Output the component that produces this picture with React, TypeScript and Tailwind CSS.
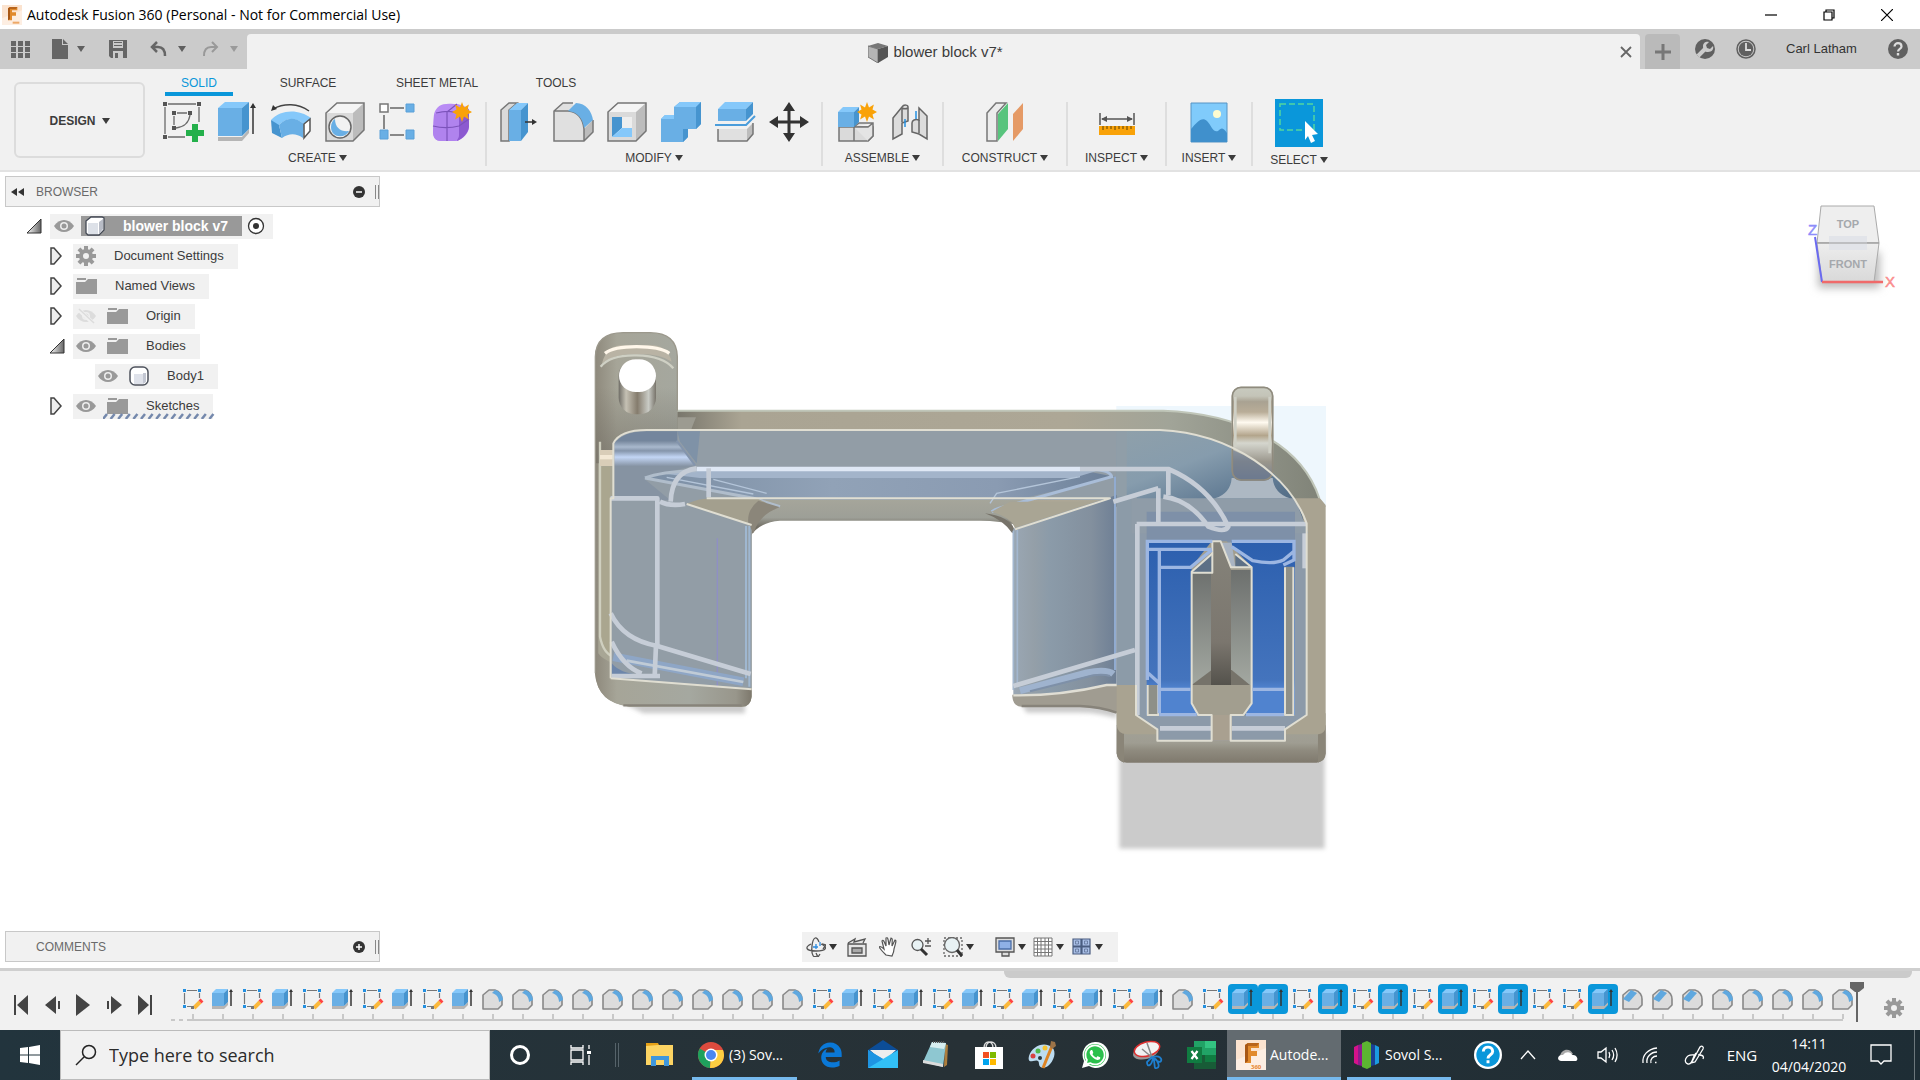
import type { ReactNode } from "react";
import { FaEdgeLegacy, FaWhatsapp } from "react-icons/fa";
import clsx from "clsx";

const UI_FONT = "font-['Liberation_Sans',Arial,sans-serif]";
const WIN_FONT = "font-['Open_Sans','Noto_Sans',sans-serif]";

/* ---------- small shared pieces ---------- */

function Caret({ className }: { className?: string }) {
  return (
    <svg viewBox="0 0 8 6" className={clsx("w-2 h-1.5 shrink-0", className)} fill="currentColor">
      <path d="M0 0h8L4 6z" />
    </svg>
  );
}

function Star({ x, y }: { x: number; y: number }) {
  return (
    <path
      transform={`translate(${x} ${y})`}
      fill="#f9a208"
      d="M0-10l2 5.600 4.900-3.200-1.400 5L10 0 5.500 2.600l1.400 5L2 4.400 0 10l-2-5.600-4.900 3.200 1.400-5L-10 0l4.500-2.600-1.400-5L-2-4.400z"
    />
  );
}

function Icon40({ children }: { children: ReactNode }) {
  return <svg viewBox="0 0 40 40" className="w-10 h-10 overflow-visible" fill="none">{children}</svg>;
}

/* ---------- ribbon icons ---------- */

const SketchIcon = (
  <Icon40>
    <path d="M5 2h28M2 5v27M36 5v15M5 35h17" stroke="#6b6b6b" strokeWidth="1.300" />
    <path d="M14 11h10M11 14v9M27 13c-1 7-6 12-14 13" stroke="#6b6b6b" strokeWidth="1.300" />
    <path d="M0 0h4v4H0zM34 0h4v4h-4zM0 33h4v4H0zM9 9h4v4H9zM25 9h4v4h-4zM9 24h4v4H9z" fill="#555" />
    <path d="M29 22h6v6h6v6h-6v6h-6v-6h-6v-6h6z" fill="#24b04b" />
  </Icon40>
);

const ExtrudeIcon = (
  <Icon40>
    <path d="M1 35h24l7-8v4l-7 8H1z" fill="#b5b5b5" />
    <path d="M1 6h24v28H1z" fill="#69afe5" />
    <path d="M1 6l7-6h24l-7 6z" fill="#85c8fa" />
    <path d="M25 6l7-6v27l-7 7z" fill="#4694cf" />
    <path d="M36 32V4" stroke="#333" strokeWidth="1.500" />
    <path d="M33 6l3-5 3 5z" fill="#333" />
  </Icon40>
);

const RevolveIcon = (
  <Icon40>
    <path d="M2 7C13 1 27 1 38 9" stroke="#444" strokeWidth="1.500" />
    <path d="M0 9l2-6 4 4z" fill="#333" />
    <path d="M0 18C10 7 28 7 40 16l-7 6C24 15 15 15 7 24z" fill="#85c8fa" />
    <path d="M0 18l8 5 3 13-10-5z" fill="#4694cf" />
    <path d="M8 23c8-8 16-8 25-1l-1 14c-7-5-14-5-21 0z" fill="#69afe5" />
    <path d="M33 22l6-5v12l-6 7z" fill="#fff" stroke="#555" strokeWidth="1.500" />
  </Icon40>
);

const HoleIcon = (
  <Icon40>
    <path d="M1 11L12 1h27L28 11z" fill="#f5f5f5" />
    <path d="M28 11L39 1v27L28 39z" fill="#bcbcbc" />
    <path d="M1 11h27v28H1z" fill="#dadada" />
    <path d="M1 11L12 1h27v27L28 39H1z" stroke="#757575" strokeWidth="1.500" />
    <circle cx="15" cy="25" r="11" fill="#f2f2f2" stroke="#666" strokeWidth="1.500" />
    <path d="M10 17c0 9 6 13 14 12-4 8-18 7-18-4 0-4 2-7 4-8z" fill="#69afe5" />
  </Icon40>
);

const PatternIcon = (
  <Icon40>
    <path d="M11 6h14M11 33h14M5 13v14" stroke="#666" strokeWidth="1.500" />
    <path d="M1 2h8v8H1z" fill="#fff" stroke="#777" strokeWidth="1.500" />
    <path d="M27 2h8v8h-8zM1 28h8v9H1zM27 28h8v9h-8z" fill="#69afe5" stroke="#5aa0d8" />
  </Icon40>
);

const FormIcon = (
  <Icon40>
    <path d="M1 12C4 3 9 1 21 2c12 0 15 5 15 13v10c0 6-6 12-12 14H8c-6 0-8-4-8-10z" fill="#b98cf5" />
    <path d="M26 12l10-5v18c-1 6-6 12-12 14 2-8 2-18 2-27z" fill="#8c5ad0" />
    <path d="M1 13c3-3 21-3 25 0v20c0 4-3 6-6 6H8c-5 0-8-3-8-9z" fill="#b083ee" />
    <path d="M0 24c8 2 18 2 26 0l10-7M14 10v29M14 10L24 2M3 11c8-2 18-2 24 1M26 12l9-6" stroke="#7c53bb" strokeWidth="1.200" />
    <Star x={29} y={10} />
  </Icon40>
);

const PressPullIcon = (
  <Icon40>
    <path d="M2 8l8-7h8l-8 7v31H2z" fill="#dadada" stroke="#777" strokeWidth="1.500" />
    <path d="M10 8h12v31H10z" fill="#69afe5" />
    <path d="M10 8l8-7h11l-7 7z" fill="#85c8fa" />
    <path d="M22 8l7-7v29l-7 9z" fill="#4694cf" />
    <path d="M26 20h8" stroke="#333" strokeWidth="1.500" />
    <path d="M33 17l5 3-5 3z" fill="#333" />
  </Icon40>
);

const FilletIcon = (
  <Icon40>
    <path d="M1 9l9-8h8l12 11 10 7v11L31 39H1z" fill="#e0e0e0" />
    <path d="M31 27l9-9v12l-9 9z" fill="#bcbcbc" />
    <path d="M20 1H10L1 9v30h30l9-9V18M31 39V27C30 17 25 10 15 9H1" stroke="#777" strokeWidth="1.500" />
    <path d="M15 9l8-8c10 0 16 9 17 17l-9 8C30 17 25 10 15 9z" fill="#69afe5" />
  </Icon40>
);

const ShellIcon = (
  <Icon40>
    <path d="M1 10l10-9h28L29 10z" fill="#f5f5f5" />
    <path d="M29 10l10-9v28L29 39z" fill="#bcbcbc" />
    <path d="M1 10h28v29H1z" fill="#dadada" />
    <path d="M1 10l10-9h28v28L29 39H1z" stroke="#757575" strokeWidth="1.500" />
    <path d="M5 15h20v20H5z" fill="#fff" />
    <path d="M5 15h10v11L5 35z" fill="#4694cf" />
    <path d="M15 15h10v11H15z" fill="#eee" />
    <path d="M15 26h10v9H5z" fill="#85c8fa" />
  </Icon40>
);

const CombineIcon = (
  <Icon40>
    <path d="M0 17l4-4h9V5l6-5h21v22l-5 5H27v8l-5 5H0z" fill="#69afe5" />
    <path d="M0 17l4-4h9v4zM13 5l6-5h21l-5 5z" fill="#85c8fa" />
    <path d="M35 5l5-5v22l-5 5zM27 27v8l-5 5V27z" fill="#4694cf" />
  </Icon40>
);

const SplitIcon = (
  <Icon40>
    <path d="M3 7h28v12H3z" fill="#69afe5" />
    <path d="M3 7l7-7h28l-7 7z" fill="#85c8fa" />
    <path d="M31 7l7-7v12l-7 7z" fill="#4694cf" />
    <path d="M0 23h31l9-9" stroke="#4b9ddb" strokeWidth="2" />
    <path d="M3 27h29v12H3z" fill="#e0e0e0" />
    <path d="M32 27l6-6v11l-6 7z" fill="#bcbcbc" />
    <path d="M3 27v12h29l6-7V21" stroke="#757575" strokeWidth="1.500" />
  </Icon40>
);

const MoveIcon = (
  <Icon40>
    <path d="M20 6v28M6 20h28" stroke="#333" strokeWidth="3" />
    <path d="M20 0l6 9H14zM20 40l6-9H14zM0 20l9-6v12zM40 20l-9-6v12z" fill="#333" />
  </Icon40>
);

const AssembleIcon = (
  <Icon40>
    <path d="M3 25h34v9l-5 5H3z" fill="#dadada" stroke="#757575" strokeWidth="1.500" />
    <path d="M18 25l5-4h14v13l-5 5M18 25v14M18 25h14l5-4" stroke="#757575" strokeWidth="1.500" fill="#e4e4e4" />
    <path d="M2 10h16v15H2z" fill="#69afe5" />
    <path d="M2 10l5-5h16l-5 5z" fill="#85c8fa" />
    <path d="M18 10l5-5v15l-5 5z" fill="#4694cf" />
    <Star x={31} y={10} />
  </Icon40>
);

const JointIcon = (
  <Icon40>
    <path d="M3 16L12 5c2-3 6-2 6 0v14l-6 2v11l-9 5z" fill="#dcdcdc" stroke="#666" strokeWidth="1.500" />
    <path d="M12 6v14M12 6c2 1 4 1 6 0" stroke="#666" strokeWidth="1.500" />
    <path d="M37 14L29 6v12c-4-1-7 0-7 3v9l7 2 8 5z" fill="#dcdcdc" stroke="#666" strokeWidth="1.500" />
    <path d="M29 18v13" stroke="#666" strokeWidth="1.500" />
    <path d="M15 17v8M26 9v8" stroke="#2490e0" strokeWidth="1.500" />
  </Icon40>
);

const ConstructIcon = (
  <Icon40>
    <path d="M2 11L11 1h10l-9 10v28H2z" fill="#ececec" stroke="#777" strokeWidth="1.500" />
    <path d="M13 12L23 1v26L13 39z" fill="#58c47d" />
    <path d="M28 12L38 1v26L28 39z" fill="#e59a66" />
  </Icon40>
);

const MeasureIcon = (
  <Icon40>
    <path d="M3 11v12M37 11v12M5 17h30" stroke="#555" strokeWidth="1.500" />
    <path d="M4 17l6-3v6zM36 17l-6-3v6z" fill="#555" />
    <path d="M2 24h36v9H2z" fill="#f9a208" />
    <path d="M6 24v4M10 24v3M14 24v3M18 24v4M22 24v3M26 24v3M30 24v4M34 24v3" stroke="#5c4000" />
  </Icon40>
);

const InsertIcon = (
  <Icon40>
    <path d="M2 1h36v39H2z" fill="#80cbfb" stroke="#5694c4" />
    <path d="M2 27c6-7 11-13 16-8 4 4 6 12 11 10 3-2 4-5 9 2v9H2z" fill="#4090cc" />
    <circle cx="28" cy="12" r="4" fill="#fdfcd0" />
  </Icon40>
);

const SelectIcon = (
  <svg viewBox="0 0 48 48" className="w-12 h-12" fill="none">
    <path d="M0 0h48v48H0z" fill="#0a97da" />
    <path d="M5 5h34v26H5z" stroke="#53d6a0" strokeWidth="1.500" strokeDasharray="6 3" />
    <path d="M30 22l13 13-6 1 3 6-4 2-3-7-3 4z" fill="#fff" />
  </svg>
);

/* ---------- browser tree icons ---------- */

function Eye({ off }: { off?: boolean }) {
  return (
    <svg viewBox="0 0 20 20" className="w-5 h-5" fill="none">
      <path d="M0 10c5-8 15-8 20 0-5 8-15 8-20 0z" fill={off ? "#dcdcdc" : "#999"} />
      <circle cx="10" cy="10" r="4" fill="#eee" />
      <circle cx="10" cy="10" r="2.500" fill={off ? "#dcdcdc" : "#999"} />
      {off && <path d="M2 3l16 15" stroke="#f1f1f1" strokeWidth="4" />}
      {off && <path d="M3 3l15 14" stroke="#dcdcdc" strokeWidth="1.500" />}
    </svg>
  );
}

function Folder() {
  return (
    <svg viewBox="0 0 21 20" className="w-[21px] h-5" fill="#999">
      <path d="M1 2h9v2H1zM0 6h9l3-3h9v15H0z" />
    </svg>
  );
}

function Gear({ className }: { className?: string }) {
  return (
    <svg viewBox="-10 -10 20 20" className={className} fill="none">
      <circle r="5" stroke="#999" strokeWidth="4" />
      {[0, 45, 90, 135].map((a) => (
        <path key={a} d="M0-10v4M0 6v4" stroke="#999" strokeWidth="4" transform={`rotate(${a})`} />
      ))}
    </svg>
  );
}

const CubeIcon = (
  <svg viewBox="0 0 20 20" className="w-5 h-5">
    <path d="M1 5l5-4h11l2 1v12l-5 5H3l-2-2z" fill="#fff" stroke="#444a55" strokeWidth="1.300" />
    <path d="M3 7h10v11H3z" fill="#dde1e8" />
    <path d="M14 6l4-3v10l-4 5z" fill="#b8bcc6" />
  </svg>
);

const BodyIcon = (
  <svg viewBox="0 0 20 20" className="w-5 h-5">
    <rect x="1" y="1" width="18" height="18" rx="5" fill="#fff" stroke="#4d525c" strokeWidth="1.500" />
    <path d="M5 8h9v10H5z" fill="#dfe2ea" />
    <path d="M14 7h3v9l-3 2z" fill="#c3c7d2" />
  </svg>
);

type Node = {
  label: string;
  arrow: "open" | "closed" | "none";
  indent: string;
  eye?: "on" | "off";
  icon: ReactNode;
  hatched?: boolean;
};

const NODES: Node[] = [
  { label: "Document Settings", arrow: "closed", indent: "pl-[43px]", icon: <Gear className="w-5 h-5" /> },
  { label: "Named Views", arrow: "closed", indent: "pl-[43px]", icon: <Folder /> },
  { label: "Origin", arrow: "closed", indent: "pl-[43px]", eye: "off", icon: <Folder /> },
  { label: "Bodies", arrow: "open", indent: "pl-[43px]", eye: "on", icon: <Folder /> },
  { label: "Body1", arrow: "none", indent: "pl-[65px]", eye: "on", icon: BodyIcon },
  { label: "Sketches", arrow: "closed", indent: "pl-[43px]", eye: "on", icon: <Folder />, hatched: true },
];

function TreeArrow({ kind }: { kind: Node["arrow"] }) {
  return (
    <button aria-label="Toggle" className="w-[30px] pl-1.5 shrink-0">
      {kind === "open" && (
        <svg viewBox="0 0 16 16" className="w-4 h-4">
          <defs>
            <linearGradient id="tri" x1="0" x2="1">
              <stop offset="0.2" stopColor="#ddd" />
              <stop offset="1" stopColor="#666" />
            </linearGradient>
          </defs>
          <path d="M15 1v14H1z" fill="url(#tri)" stroke="#333" />
        </svg>
      )}
      {kind === "closed" && (
        <svg viewBox="0 0 14 18" className="w-3.5 h-[18px]" fill="#eee" stroke="#444" strokeWidth="1.500">
          <path d="M2 1h3l7 8-7 8H2z" />
        </svg>
      )}
    </button>
  );
}

function PanelHeader({ label, children, open }: { label: string; children?: ReactNode; open: boolean }) {
  return (
    <div className="w-[375px] h-[31px] flex items-center bg-[#f1f1f1] border border-[#c8c8c8] text-xs text-[#6a6a6a] pl-[5px]">
      <span className="w-[25px]">{children}</span>
      <span>{label}</span>
      <button aria-label={open ? "Collapse" : "Expand"} className="ml-auto mr-2.5">
        <svg viewBox="0 0 12 12" className="w-3 h-3">
          <circle cx="6" cy="6" r="6" fill="#333" />
          <path d={open ? "M3 6h6" : "M3 6h6M6 3v6"} stroke="#fff" strokeWidth="1.500" />
        </svg>
      </button>
      <span className="w-1 h-3.5 border-x border-[#888]" />
    </div>
  );
}

function Browser() {
  return (
    <section className="w-[375px] text-[13px] text-[#3c3c3c]">
      <PanelHeader label="BROWSER" open>
        <svg viewBox="0 0 13 8" className="w-[13px] h-2" fill="#333">
          <path d="M6 0v8L0 4zM13 0v8L7 4z" />
        </svg>
      </PanelHeader>
      <div className="flex items-center h-[30px] pl-[15px] mt-1">
        <TreeArrow kind="open" />
        <div className="flex items-center h-[25px] bg-[#f1f1f1] pl-1 pr-2 gap-[7px]">
          <Eye />
          <span className="flex items-center gap-[18px] h-5 bg-[#999] text-white font-bold text-sm pl-1 pr-3.5">
            {CubeIcon}
            blower block v7
          </span>
          <svg viewBox="0 0 18 18" className="w-[18px] h-[18px] -ml-0.5">
            <circle cx="9" cy="9" r="7.500" fill="#fff" stroke="#333" strokeWidth="1.300" />
            <circle cx="9" cy="9" r="3" fill="#333" />
          </svg>
        </div>
      </div>
      {NODES.map((n) => (
        <div key={n.label} className={clsx("flex items-center h-[30px] -ml-[5px]", n.indent)}>
          <TreeArrow kind={n.arrow} />
          <div className="relative flex items-center h-[25px] bg-[#f1f1f1] pl-[3px] pr-3.5">
            {n.eye && <span className="mr-[11px]"><Eye off={n.eye === "off"} /></span>}
            <span className="mr-[18px]">{n.icon}</span>
            {n.label}
            {n.hatched && (
              <svg className="absolute left-[30px] bottom-0 h-1.5 w-[112px]">
                {Array.from({ length: 15 }, (_, i) => (
                  <path key={i} d={`M${i * 7.6} 6l4-5`} stroke="#7488ac" strokeWidth="2.500" />
                ))}
              </svg>
            )}
          </div>
        </div>
      ))}
    </section>
  );
}

/* ---------- top bars ---------- */

function FusionLogo({ className, tag }: { className?: string; tag?: boolean }) {
  return (
    <svg viewBox="0 0 30 30" className={className}>
      <path d="M0 0h30v30H0z" fill="#fbe3cf" />
      <path d="M0 20L30 8v22H0z" fill="#fdeee2" />
      <path d="M9 5l3-2h11v5h-8v3h6v5h-6v7H9z" fill="#e18a2c" />
      <path d="M9 5l3-2v18l-3 2z" fill="#a85714" />
      <path d="M12 3h11l-2 3h-9z" fill="#b8651c" />
      {tag ? (
        <text x="15" y="29" fontSize="6" fontWeight="bold" fill="#e8872f">360</text>
      ) : (
        <path d="M16 25h10v3H16z" fill="#eda867" />
      )}
    </svg>
  );
}

function TitleBar() {
  return (
    <header className={clsx("h-[29px] flex items-center bg-white pl-0.5 pr-1", WIN_FONT)}>
      <FusionLogo className="w-5 h-5" />
      <h1 className="ml-[5px] text-sm text-black">Autodesk Fusion 360 (Personal - Not for Commercial Use)</h1>
      <div className="ml-auto flex">
        {[
          ["Minimize", "M0 6h12"],
          ["Restore", "M1 3h8v8H1zM3 3V1h8v8H9"],
          ["Close", "M0 0l12 12M12 0L0 12"],
        ].map(([name, d]) => (
          <button key={name} aria-label={name} className="w-[58px] h-7 flex items-center justify-center">
            <svg viewBox="0 0 12 12" className="w-3 h-3" fill="none" stroke="#000" strokeWidth="1.200">
              <path d={d} />
            </svg>
          </button>
        ))}
      </div>
    </header>
  );
}

function TabStrip() {
  return (
    <div className="h-10 flex bg-[#cbcbcb] text-[#5f5f5f]">
      <div className="w-[247px] flex items-center pl-[11px] shrink-0">
        <button aria-label="Data panel" className="w-5">
          <svg viewBox="0 0 19 19" className="w-[19px] h-[19px]" fill="#666">
            <path d="M0 1h5v5H0zM7 1h5v5H7zM14 1h5v5h-5zM0 7h5v5H0zM7 7h5v5H7zM14 7h5v5h-5zM0 13h5v5H0zM7 13h5v5H7zM14 13h5v5h-5z" />
          </svg>
        </button>
        <button aria-label="File" className="ml-5 flex items-center gap-2">
          <svg viewBox="0 0 18 20" className="w-[18px] h-5" fill="#666">
            <path d="M1 0h10v6h6v14H1zM12 0l5 5h-5z" />
          </svg>
          <Caret />
        </button>
        <button aria-label="Save" className="ml-6">
          <svg viewBox="0 0 18 18" className="w-[18px] h-[18px]">
            <path d="M0 0h18v18H2l-2-2z" fill="#666" />
            <path d="M4 1h10v7H4zM4 11h10v7H4z" fill="#cbcbcb" />
            <path d="M5 2h8v1H5zM5 5h8v1H5zM6 13h3v5H6z" fill="#666" />
          </svg>
        </button>
        <button aria-label="Undo" className="ml-[23px] flex items-center gap-[11px]">
          <svg viewBox="0 0 17 16" className="w-[17px] h-4" fill="none" stroke="#666" strokeWidth="2.500">
            <path d="M7 1L2 6l5 5M2 6h6c5 0 7 4 7 9" />
          </svg>
          <Caret />
        </button>
        <button aria-label="Redo" className="ml-4 flex items-center gap-[11px] text-[#9a9a9a]">
          <svg viewBox="0 0 17 16" className="w-[17px] h-4" fill="none" stroke="#999" strokeWidth="2">
            <path d="M10 1l5 5-5 5M15 6H9c-5 0-7 4-7 9" />
          </svg>
          <Caret />
        </button>
      </div>
      <div className="flex-1 mt-[5px] rounded-t bg-[#f1f1f1] flex items-center text-[#3c3c3c]">
        <span className="w-3" />
        <span className="flex-1 flex items-center justify-center gap-[5px] pt-0.5 text-[15px]">
          <svg viewBox="0 0 20 20" className="w-5 h-5">
            <path d="M0 3l10-3 10 3-10 3z" fill="#777" />
            <path d="M0 3l10 3v14L0 14z" fill="#b5b5b5" stroke="#777" />
            <path d="M20 3L10 6v14l10-6z" fill="#555" />
          </svg>
          blower block v7*
        </span>
        <button aria-label="Close tab" className="w-7 flex justify-center">
          <svg viewBox="0 0 12 12" className="w-3 h-3" stroke="#666" strokeWidth="1.800">
            <path d="M1 1l10 10M11 1L1 11" />
          </svg>
        </button>
      </div>
      <div className="w-[280px] shrink-0 flex items-center text-[13px] text-[#333]">
        <button aria-label="New tab" className="w-[35px] h-[35px] mt-[5px] ml-[5px] rounded-t bg-[#bababa] flex items-center justify-center">
          <svg viewBox="0 0 16 16" className="w-4 h-4" stroke="#777" strokeWidth="3">
            <path d="M8 0v16M0 8h16" />
          </svg>
        </button>
        <button aria-label="Extensions" className="ml-[15px]">
          <svg viewBox="0 0 20 20" className="w-5 h-5">
            <circle cx="10" cy="10" r="10" fill="#606060" />
            <path d="M3 17l7-7" stroke="#cbcbcb" strokeWidth="4" />
            <path d="M8 7c0-4 4-5 6-4l-3 3 1 3 3 1 3-3c1 3-1 6-5 6-3 0-5-2-5-6z" fill="#cbcbcb" />
          </svg>
        </button>
        <button aria-label="Job status" className="ml-[21px]">
          <svg viewBox="0 0 20 20" className="w-5 h-5" fill="none">
            <circle cx="10" cy="10" r="9" stroke="#606060" strokeWidth="1.500" />
            <circle cx="10" cy="10" r="7.300" fill="#606060" />
            <path d="M10 4v7h5" stroke="#ddd" strokeWidth="1.800" />
          </svg>
        </button>
        <button className="ml-[30px]">Carl Latham</button>
        <button aria-label="Help" className="ml-auto mr-3">
          <svg viewBox="0 0 20 20" className="w-5 h-5" fill="none">
            <circle cx="10" cy="10" r="10" fill="#606060" />
            <path d="M6.500 7.500c0-4.500 7-4.500 7 0 0 2.500-3.500 2.300-3.500 5" stroke="#ddd" strokeWidth="2.200" />
            <path d="M8.800 14h2.400v2.500H8.800z" fill="#ddd" />
          </svg>
        </button>
      </div>
    </div>
  );
}

const TABS = [
  { label: "SOLID", width: "w-[68px]" },
  { label: "SURFACE", width: "w-[150px]" },
  { label: "SHEET METAL", width: "w-[108px]" },
  { label: "TOOLS", width: "w-[130px]" },
];

const GROUPS = [
  { label: "CREATE", width: "w-[332px] pr-[5px]", icons: [SketchIcon, ExtrudeIcon, RevolveIcon, HoleIcon, PatternIcon, FormIcon] },
  { label: "MODIFY", width: "w-[336px]", icons: [PressPullIcon, FilletIcon, ShellIcon, CombineIcon, SplitIcon, MoveIcon] },
  { label: "ASSEMBLE", width: "w-[121px]", icons: [AssembleIcon, JointIcon] },
  { label: "CONSTRUCT", width: "w-[124px]", icons: [ConstructIcon] },
  { label: "INSPECT", width: "w-[99px]", icons: [MeasureIcon] },
  { label: "INSERT", width: "w-[86px]", icons: [InsertIcon] },
  { label: "SELECT", width: "w-[94px]", icons: [SelectIcon] },
];

function Ribbon() {
  return (
    <div className="h-[103px] flex bg-[#f1f1f1] border-b-2 border-[#e2e2e2] text-xs text-[#3c3c3c]">
      <button className="w-[131px] h-[76px] mt-[13px] ml-3.5 shrink-0 border-2 border-[#dcdcdc] rounded-md flex items-center justify-center gap-1.5 pt-0.5 font-bold">
        DESIGN
        <Caret />
      </button>
      <div className="ml-2.5">
        <div role="tablist" className="flex h-[27px] pl-2.5">
          {TABS.map((t, i) => (
            <button
              key={t.label}
              role="tab"
              className={clsx("pt-1 border-b-4", t.width, i === 0 ? "text-[#0a97da] border-[#0a97da]" : "border-transparent")}
            >
              {t.label}
            </button>
          ))}
        </div>
        <div className="flex mt-1.5">
          {GROUPS.map((g) => (
            <div key={g.label} className={clsx("h-16 flex flex-col items-center border-r-2 border-[#dedede] last:border-transparent", g.width)}>
              <div className="h-[42px] flex items-center">
                {g.icons.map((icon, i) => (
                  <button key={i} aria-label={`${g.label} ${i + 1}`} className="w-[54px] flex justify-center">
                    {icon}
                  </button>
                ))}
              </div>
              <button className="mt-2 flex items-center gap-[3px] leading-4">
                {g.label}
                <Caret />
              </button>
            </div>
          ))}
        </div>
      </div>
    </div>
  );
}

/* ---------- 3D model ---------- */

// The part is drawn on a grid three times finer than the canvas.
function Model() {
  return (
    <svg viewBox="0 0 1920 796" className="absolute inset-0 w-full h-full" fill="none">
      <defs>
        <linearGradient id="bar" x1="0" y1="0" x2="0" y2="1">
          <stop offset="0" stopColor="#a6a69b" />
          <stop offset="0.5" stopColor="#9d9f97" />
          <stop offset="0.75" stopColor="#716d63" />
          <stop offset="1" stopColor="#8d897d" />
        </linearGradient>
        <linearGradient id="rim" x1="0" y1="0" x2="1" y2="0">
          <stop offset="0" stopColor="#78766c" />
          <stop offset="0.1" stopColor="#aaa493" />
          <stop offset="0.6" stopColor="#ada796" />
          <stop offset="0.76" stopColor="#a1a498" />
          <stop offset="1" stopColor="#7f8277" />
        </linearGradient>
        <linearGradient id="ear" x1="0" y1="0" x2="1" y2="0">
          <stop offset="0" stopColor="#8e897c" />
          <stop offset="0.14" stopColor="#a6a598" />
          <stop offset="0.6" stopColor="#a5a8a0" />
          <stop offset="0.9" stopColor="#98968b" />
          <stop offset="1" stopColor="#7d786c" />
        </linearGradient>
        <linearGradient id="shade" x1="0" y1="0" x2="0" y2="1">
          <stop offset="0" stopColor="#6b675e" stopOpacity="0" />
          <stop offset="1" stopColor="#6b675e" stopOpacity="0.55" />
        </linearGradient>
        <linearGradient id="hole" x1="0" y1="0" x2="1" y2="0">
          <stop offset="0" stopColor="#6f6d66" />
          <stop offset="0.2" stopColor="#c5c1b4" />
          <stop offset="0.5" stopColor="#857c6d" />
          <stop offset="0.8" stopColor="#c9cbc5" />
          <stop offset="1" stopColor="#77736a" />
        </linearGradient>
        <linearGradient id="leg" x1="0" y1="0" x2="1" y2="0">
          <stop offset="0" stopColor="#9aa7b4" />
          <stop offset="0.2" stopColor="#949fa8" />
          <stop offset="0.35" stopColor="#8b9ba9" />
          <stop offset="0.75" stopColor="#83909e" />
          <stop offset="1" stopColor="#6e7f95" />
        </linearGradient>
        <linearGradient id="roll" x1="0" y1="0" x2="0" y2="1">
          <stop offset="0" stopColor="#74859b" />
          <stop offset="0.25" stopColor="#a9b9cd" />
          <stop offset="0.4" stopColor="#8595ab" />
          <stop offset="0.65" stopColor="#c3d6f5" />
          <stop offset="1" stopColor="#8794a5" />
        </linearGradient>
        <linearGradient id="pocket" x1="0" y1="0" x2="1" y2="0">
          <stop offset="0" stopColor="#7b8ea4" />
          <stop offset="0.4" stopColor="#91a2b7" />
          <stop offset="0.75" stopColor="#8a9bb2" />
          <stop offset="1" stopColor="#6b7f98" />
        </linearGradient>
        <linearGradient id="arc" x1="0" y1="0" x2="0.8" y2="1">
          <stop offset="0" stopColor="#8fa0aa" />
          <stop offset="0.4" stopColor="#869cad" />
          <stop offset="0.75" stopColor="#5f7992" />
          <stop offset="1" stopColor="#4e6780" />
        </linearGradient>
        <linearGradient id="pin" x1="0" y1="0" x2="0" y2="1">
          <stop offset="0" stopColor="#c9cbc0" />
          <stop offset="0.1" stopColor="#c4c4b8" />
          <stop offset="0.16" stopColor="#a9a292" />
          <stop offset="0.27" stopColor="#b9ad98" />
          <stop offset="0.38" stopColor="#fffaf0" />
          <stop offset="0.52" stopColor="#b3a58c" />
          <stop offset="0.6" stopColor="#d5d6ce" />
          <stop offset="0.8" stopColor="#9a968c" />
          <stop offset="1" stopColor="#77808f" />
        </linearGradient>
        <linearGradient id="slot" x1="0" y1="0" x2="0" y2="1">
          <stop offset="0" stopColor="#6d706e" />
          <stop offset="1" stopColor="#a3a8a1" />
        </linearGradient>
        <linearGradient id="core" x1="0" y1="0" x2="0" y2="1">
          <stop offset="0" stopColor="#85837a" />
          <stop offset="0.7" stopColor="#7b766e" />
          <stop offset="1" stopColor="#54524c" />
        </linearGradient>
        <linearGradient id="blue" x1="0" y1="0" x2="0" y2="1">
          <stop offset="0" stopColor="#2c5fae" />
          <stop offset="0.8" stopColor="#4474bd" />
          <stop offset="0.85" stopColor="#5083cf" />
          <stop offset="1" stopColor="#5083cf" />
        </linearGradient>
        <linearGradient id="base" x1="0" y1="0" x2="0" y2="1">
          <stop offset="0" stopColor="#a5a69c" />
          <stop offset="0.6" stopColor="#9f9d92" />
          <stop offset="0.75" stopColor="#8f8b7f" />
          <stop offset="1" stopColor="#7f796d" />
        </linearGradient>
        <filter id="soft" x="-10%" y="-10%" width="120%" height="120%">
          <feGaussianBlur stdDeviation="7" />
        </filter>
      </defs>

      <g transform="translate(580 148) scale(0.33333)">
        {/* cast shadows */}
        <g fill="#cbcbcb" filter="url(#soft)">
          <rect x="1618" y="1240" width="616" height="346" />
          <path d="M110 1140H495V1180H190zM1310 1130H1610V1195Q1560 1178 1500 1178H1340z" />
        </g>
        <path d="M1609 258H2238V560H1609z" fill="#eef7fd" />

        {/* bar and right arc */}
        <path d="M290 272H1750C1960 280 2160 360 2218 535L2237 560H290z" fill="url(#rim)" />
        <path d="M290 272H1750C1960 280 2160 360 2218 535" stroke="#c0c6b9" strokeWidth="6" />
        <path d="M293 292H348L335 325V340H293z" fill="#9c9b91" />
        <path d="M500 535H1330V620Q1270 602 1200 602H600Q540 605 510 650z" fill="url(#bar)" />

        {/* left leg */}
        <path d="M45 110Q48 38 130 38H210Q290 38 292 110V540H520L515 640V1130Q512 1160 485 1160H150Q52 1150 45 1060z" fill="#a8a695" />
        <path d="M45 110Q48 38 130 38H210Q290 38 292 110V430H55V1000Q90 1060 515 1105V1130Q512 1160 485 1160H150Q52 1150 45 1060z" fill="url(#ear)" />
        <path d="M48 200H292V430H48z" fill="url(#shade)" />
        <path d="M130 1156H485" stroke="#87837a" strokeWidth="7" />
        <path d="M66 130Q80 75 130 75H210Q262 75 275 125Q240 100 170 102Q100 102 66 130z" fill="#b9b3a4" />
        <path d="M75 100Q100 80 170 80T268 100" stroke="#fff7ea" strokeWidth="10" />
        <path d="M62 140Q90 104 170 106T280 145" stroke="#cfd0c4" strokeWidth="7" />
        <rect x="116" y="118" width="112" height="165" rx="50" fill="url(#hole)" />
        <rect x="117" y="118" width="111" height="98" rx="50" fill="#fff" />
        <path d="M62 440H90V1010Q62 990 60 950z" fill="#aaa68f" />
        <path d="M60 365V950Q70 1000 100 1010" stroke="#cfcfbf" strokeWidth="7" />
        <path d="M60 390H110V438H60z" fill="#d9cdb8" />
        <path d="M60 405H110V418H60z" fill="#f3e8d5" />
        <path d="M46 110Q48 38 130 38H210Q290 38 292 110V272M46 110V1060" stroke="#9b988c" strokeWidth="4" />

        {/* blue plate */}
        <path d="M100 370Q120 330 200 330H1740C1960 340 2130 470 2180 610V1185H1670V540H1590H380L320 552L515 615V1105L92 1075V535H100z" fill="#929da6" />
        <path d="M1610 333H1740C1960 340 2120 450 2175 600H1670V530H1610z" fill="url(#arc)" />
        <path d="M1610 333H1640V530H1610z" fill="#909ea8" />
        <path d="M104 370Q130 334 200 334H292V364H104z" fill="#74869d" />
        <path d="M103 362H290L345 438H103z" fill="url(#roll)" />
        <path d="M290 362L345 436" stroke="#8495ad" strokeWidth="6" />
        <path d="M103 438H340L190 474L270 540H103z" fill="#8693a2" />
        <path d="M292 334H360L350 430L300 365z" fill="#7f92a7" />
        <path d="M190 474Q260 450 350 450H1500L1605 470L1330 535H540z" fill="url(#pocket)" />
        <path d="M240 460Q300 450 350 450H1560L1480 474H360z" fill="#a3b4ca" />
        <path d="M195 474Q240 455 350 452M195 474L520 535L600 560" stroke="#b0bdcb" strokeWidth="9" />
        <path d="M260 472L520 522M400 478L560 520M1500 470L1250 520L1230 550" stroke="#b4c5d9" strokeWidth="4" />
        <path d="M1500 447Q1590 445 1595 470L1290 556Q1250 565 1235 575" stroke="#a9bdd8" strokeWidth="9" />
        <path d="M350 447H1500" stroke="#dfe8f5" strokeWidth="14" />
        <path d="M320 552Q350 536 400 534H530L560 550Q500 570 512 612z" fill="#a39f8e" />
        <path d="M535 542Q500 570 505 610L520 640Q540 580 600 562z" fill="#8b867a" />
        <path d="M1290 545H1590L1305 628Q1300 595 1235 575z" fill="#a9a594" />
        <path d="M1303 628Q1290 590 1215 580Q1270 600 1297 640z" fill="#77736a" />
        <path d="M1300 626L1610 525V1100H1570Q1440 1130 1300 1126z" fill="url(#leg)" />
        <path d="M1300 632V1110M1312 630V1098" stroke="#a3b7cf" strokeWidth="5" />
        <path d="M1605 470V1050" stroke="#91abd0" strokeWidth="6" />
        <path d="M508 618V1100M498 618V1075" stroke="#9fb7d0" strokeWidth="6" />
        <path d="M412 655V1100" stroke="#8f8fc4" strokeWidth="4" />

        {/* right foot */}
        <path d="M1297 1120V1130Q1300 1160 1325 1160H1500Q1560 1160 1612 1180V1095H1570Q1440 1128 1297 1124z" fill="#a09c91" />
        <path d="M1325 1158H1500Q1560 1160 1610 1178" stroke="#87837a" strokeWidth="7" />
        <path d="M1300 1126Q1440 1128 1580 1095H1668" stroke="#e0ded4" strokeWidth="7" />
        <path d="M1320 1112L1520 1058Q1580 1046 1600 1062" stroke="#9fb3ce" strokeWidth="20" />
        <path d="M1350 1114L1540 1066Q1570 1062 1590 1068" stroke="#7e90a8" strokeWidth="6" />
        <path d="M100 1010L490 1085" stroke="#8ea6c6" strokeWidth="26" />
        <path d="M140 1022L490 1086" stroke="#c0cbd6" strokeWidth="8" />
        <path d="M95 1030Q120 1060 180 1065H95z" fill="#6d86aa" />

        {/* clip box */}
        <path d="M1610 1180V1300Q1612 1328 1640 1328H2210Q2237 1325 2237 1300V1180z" fill="url(#base)" />
        <path d="M1610 1215V1300Q1612 1320 1632 1328V1240zM2237 1215V1300Q2235 1320 2214 1328V1240z" fill="#8a8578" />
        <path d="M1610 1095H1668V1185L1730 1225V1262H2115V1225L2180 1185V660Q2175 590 2145 535H2220L2237 555V1220Q2235 1240 2215 1243H1640Q1612 1240 1610 1215z" fill="#a9a391" />
        <path d="M1610 535H1670V1095H1610z" fill="#8c9ba8" />
        <path d="M1665 620V1185L1735 1228V1262H2115V1228L2180 1185V620z" fill="#8c9aa9" />
        <path d="M1655 535H2145L2185 640H1655z" fill="#8f9ca8" />
        <path d="M1700 575H2145V665H1700z" fill="#7e90a8" />
        <path d="M1895 1180H1955V1262H1895z" fill="#a9a090" />
        <path d="M1700 662H1900V1185H1700zM1955 662H2145V1185H1955z" fill="url(#blue)" />
        <path d="M1895 664H1940L2015 740V1150L1995 1185H1855L1835 1150V740z" fill="#a29e8f" />
        <path d="M1835 750H2015V1095H1835z" fill="url(#slot)" />
        <path d="M1835 1095L1895 1050H1955L2010 1095z" fill="#76736a" />
        <path d="M1895 664H1925L1953 750V1095H1893V700z" fill="url(#core)" />
        <path d="M1833 756L1897 700V758zM1966 702L2015 742H1966z" fill="#5d7086" />
        <path d="M1925 668H1955L1966 742H1953z" fill="#a9b4c2" />
        <path d="M1703 1095H1735V1185H1703zM2115 740H2142V1185H2115z" fill="#8e9089" />
        <path d="M1905 535Q1952 520 1955 474H2078Q2082 520 2130 535z" fill="#adb8c3" />

        {/* pin */}
        <rect x="1955" y="200" width="125" height="282" rx="28" fill="url(#pin)" />
        <path d="M1958 390Q2020 415 2078 465Q2074 480 2050 481H1985Q1960 480 1958 455z" fill="#64758f" opacity="0.6" />
        <rect x="1957" y="202" width="121" height="278" rx="26" stroke="#8f8b7e" strokeWidth="5" />
        <path d="M1966 230V380M2069 230V400" stroke="#cfd0c6" strokeWidth="8" />

        {/* sketch lines */}
        <g stroke="#c6cdd7" strokeWidth="14" strokeLinejoin="round">
          <path d="M92 535H232V975M228 975L224 1070M240 545Q270 560 315 552M272 545Q275 455 350 445M386 445V532" />
          <path d="M92 880Q130 960 232 978L512 1062M95 965Q130 1040 185 1060M95 1068H240" />
          <path d="M1500 447H1765Q1890 500 1945 620Q1935 640 1885 620Q1830 540 1750 530M1735 505L1600 545M1765 450V525M1735 505V612M1670 612H2180M1672 612V1185" />
          <path d="M1300 1098L1665 990M1740 1225H1895M1955 1225H2115" />
          <path d="M2174 640V745" />
        </g>
        <g stroke="#e0ded2" strokeWidth="6" strokeLinejoin="round">
          <path d="M92 1075V535H100V370Q120 330 200 330H1740C1960 340 2130 470 2180 610V1185L2115 1228V1262H1952V1185H1990L2015 1150V742L1966 702M92 1075L515 1108" />
          <path d="M380 535H1590L1305 628M320 552L515 615M1668 1095V1185L1732 1228V1262H1895V1185H1855L1835 1150V755L1898 700" />
          <path d="M1703 1095V1185H1735V1095M2115 742V1185H2140V742M1833 758H1897V664H1922L1953 742H2015" />
        </g>
        <g stroke="#9cb6e2" strokeWidth="10">
          <path d="M1702 1080V664H1897M1702 688H1895M1738 688V1180M1738 742H1832L1895 690M1955 664H2142V720L2110 735M1955 680L2018 722Q2080 735 2110 720L2140 695M1738 1108H1832M2018 1108H2112M1738 1184H1850M1998 1184H2112M1705 1060L1738 1090" />
        </g>
      </g>
    </svg>
  );
}

function ViewCube() {
  return (
    <svg viewBox="0 0 94 104" className="absolute top-6 right-5 w-[94px] h-[104px]">
      <defs>
        <linearGradient id="front" x1="0" y1="0" x2="0" y2="1">
          <stop offset="0" stopColor="#ededed" />
          <stop offset="1" stopColor="#d9d9d9" />
        </linearGradient>
        <filter id="cubeShadow" x="-30%" y="-30%" width="160%" height="160%">
          <feGaussianBlur stdDeviation="4" />
        </filter>
      </defs>
      <path d="M12 56h62v36H12z" fill="#bbb" filter="url(#cubeShadow)" />
      <path d="M15 10h53l5 37H11z" fill="#eee" stroke="#aaa" />
      <path d="M11 47h62l-5 39H16z" fill="url(#front)" stroke="#aaa" />
      <path d="M23 40h38v14H23z" fill="#e2e4e9" />
      <path d="M11 47h62" stroke="#999" />
      <path d="M9 41l7 45" stroke="#6a6af0" strokeWidth="2" />
      <path d="M16 86h61" stroke="#f06a6a" strokeWidth="2.500" />
      <text x="42" y="32" fontSize="11" fontWeight="bold" fill="#a5a8ac" textAnchor="middle">TOP</text>
      <text x="42" y="72" fontSize="11" fontWeight="bold" fill="#a5a8ac" textAnchor="middle">FRONT</text>
      <text x="2" y="39" fontSize="15" fill="#8d8dfa" stroke="#8d8dfa" strokeWidth="0.500">Z</text>
      <text x="79" y="91" fontSize="15" fill="#fa8d8d" stroke="#fa8d8d" strokeWidth="0.500">X</text>
    </svg>
  );
}

const NAV_TOOLS: { name: string; icon: ReactNode; caret?: boolean; cell: string }[] = [
  {
    name: "Orbit", caret: true, cell: "w-[41px]",
    icon: (
      <g stroke="#555" strokeWidth="1.300" fill="none">
        <path d="M5 7c-6 3-6 7 5 7s12-4 5-7M13 5c-2-6-6-6-7 4s2 12 5 10" />
        <path d="M17 12l3-4-4-1M10 16l2 4 2-3" />
        <path d="M10 7v5M7 10h5M14 5v4" stroke="#2b8be0" />
      </g>
    ),
  },
  {
    name: "Look at", cell: "w-8",
    icon: (
      <g stroke="#555" strokeWidth="1.300" fill="#e6e6e6">
        <path d="M1 6L8 2 7 5l11-3-2 4M1 7h18v12H1z" />
        <path d="M5 11h10v5H5z" fill="#aaa" />
      </g>
    ),
  },
  {
    name: "Pan", cell: "w-8",
    icon: (
      <path d="M7 18C4 15 2 13 0 10c1-1 3 0 5 2L3 4c1-2 2 0 4 5L7 1c2-1 2 1 3 7l2-7c2 0 1 3 1 8l3-6c2 0 0 5-1 9 0 3-1 5-2 7z" fill="#fff" stroke="#555" strokeWidth="1.200" />
    ),
  },
  {
    name: "Zoom", cell: "w-8",
    icon: (
      <g stroke="#555" strokeWidth="1.300" fill="none">
        <circle cx="6.500" cy="8" r="5.500" fill="#e8f2f4" />
        <path d="M10 12l6 6" stroke="#333" strokeWidth="3" />
        <path d="M17 1v6M14 4h6M14 9h6" />
      </g>
    ),
  },
  {
    name: "Fit", caret: true, cell: "w-[52px]",
    icon: (
      <g stroke="#666" strokeWidth="1.300" fill="none">
        <path d="M1 1h18v18H1z" strokeDasharray="2 2" />
        <circle cx="9" cy="8" r="7.500" fill="#e8f2f4" />
        <path d="M14 13l5 6" stroke="#333" strokeWidth="3" />
      </g>
    ),
  },
  {
    name: "Display settings", caret: true, cell: "w-[38px]",
    icon: (
      <g stroke="#555" strokeWidth="1.300" fill="#ddd">
        <path d="M1 1h18v14H1zM7 15v4h7v-4" />
        <path d="M4 4h12v8H4z" fill="#8fb0e6" stroke="#4b6ea8" />
      </g>
    ),
  },
  {
    name: "Grid and snaps", caret: true, cell: "w-[39px]",
    icon: (
      <g stroke="#777" fill="#fff">
        <path d="M1 1h18v18H1zM4.500 1v18M8 1v18M12 1v18M15.500 1v18M1 4.500h18M1 8h18M1 12h18M1 15.500h18" />
      </g>
    ),
  },
  {
    name: "Viewports", caret: true, cell: "w-[34px]",
    icon: (
      <g stroke="#4a5d80" strokeWidth="1.200" fill="#a9bfe6">
        <path d="M1 2h8v7H1zM10 2h8v7h-8zM1 10h8v7H1zM10 10h8v7h-8z" />
        <path d="M3.500 4h3v3h-3zM12.500 4h3v3h-3zM3.500 12h3v3h-3zM12.500 12h3v3h-3z" strokeWidth="0.600" />
      </g>
    ),
  },
];

function Canvas() {
  return (
    <main className="relative flex-1 min-h-0 flex flex-col bg-white pt-1 pb-1.5">
      <Model />
      <ViewCube />
      <div className="relative pl-[5px]">
        <Browser />
      </div>
      <div className="relative mt-auto grid grid-cols-[1fr_auto_1fr] items-end">
        <div className="pl-[5px]">
          <PanelHeader label="COMMENTS" open={false} />
        </div>
        <div className="h-[30px] flex items-center bg-[#f1f1f1] pl-1 pr-3 text-[#333]">
          {NAV_TOOLS.map((t) => (
            <button key={t.name} aria-label={t.name} className={clsx("flex items-center gap-[3px]", t.cell)}>
              <svg viewBox="0 0 20 20" className="w-5 h-5 shrink-0">{t.icon}</svg>
              {t.caret && <Caret />}
            </button>
          ))}
        </div>
      </div>
    </main>
  );
}

/* ---------- timeline ---------- */

// S sketch, E extrude, X selected extrude, F fillet, C chamfer
const FEATURES = "SESESESESEFFFFFFFFFFFSESESESESESEFSXXSXSXSXSXSSXCCCFFFFF".split("");

function FeatureIcon({ kind }: { kind: string }) {
  if (kind === "S") {
    return (
      <svg viewBox="0 0 22 22" className="w-[22px] h-[22px]" fill="none">
        <path d="M5 2.500h10M2.500 5v11M17.500 5v5M5 18.500h5" stroke="#777" strokeWidth="1.200" />
        <path d="M1 1h3v3H1zM16 1h3v3h-3zM1 17h3v3H1z" fill="#2490e0" />
        <path d="M12 20l6-6" stroke="#fbb83c" strokeWidth="4" />
        <path d="M18 14l2-2" stroke="#f44" strokeWidth="4" />
        <path d="M9 18h3v3H9z" fill="#777" />
      </svg>
    );
  }
  if (kind === "E" || kind === "X") {
    return (
      <svg viewBox="0 0 22 22" className="w-[22px] h-[22px]" fill="none">
        <path d="M0 18h12l4-4v3l-4 4H0z" fill="#b5b5b5" />
        <path d="M0 5h12v13H0z" fill="#69afe5" />
        <path d="M0 5l4-4h12l-4 4z" fill="#85c8fa" />
        <path d="M12 5l4-4v13l-4 4z" fill="#4694cf" />
        <path d="M19 18V3" stroke="#333" strokeWidth="1.500" />
        <path d="M17 4l2-3 2 3z" fill="#333" />
      </svg>
    );
  }
  return (
    <svg viewBox="0 0 22 22" className="w-[22px] h-[22px]" fill="none">
      <path d="M1 7l6-5h6c5 1 7 6 7 9v6l-4 4H1z" fill="#dcdcdc" stroke="#888" strokeWidth="1.600" strokeLinejoin="round" />
      {kind === "F" ? (
        <path d="M10 5l3-3c5 1 8 6 8 10l-4 2c0-5-3-8-7-9z" fill="#5fa8df" />
      ) : (
        <path d="M1 11l8-9 6 3-8 9z" fill="#5fa8df" />
      )}
    </svg>
  );
}

const PLAYBACK = [
  ["Start", "M1 0h2v20H1zM15 0v20L4 10z"],
  ["Step back", "M12 1v18L1 10zM14 6h2v8h-2z"],
  ["Play", "M1 -1v22l14-11z"],
  ["Step forward", "M1 6h2v8H1zM5 1v18l11-9z"],
  ["End", "M1 0v20l11-10zM13 0h2v20h-2z"],
];

function Timeline() {
  return (
    <footer className="h-[62px] shrink-0 bg-[#f1f1f1] border-t-[3px] border-[#cfcfcf] flex flex-col">
      <div className="h-[7px] flex justify-end pr-2">
        <div className="w-[47.5%] h-[7px] rounded-b-md bg-[#cbcbcb]" />
      </div>
      <div className="flex">
        <div className="w-[171px] shrink-0 pl-1.5 flex items-center h-[54px]">
          {PLAYBACK.map(([name, d]) => (
            <button key={name} aria-label={name} className="w-[31px] flex justify-center">
              <svg viewBox="0 -1 17 22" className="w-[17px] h-[22px]" fill="#444">
                <path d={d} />
              </svg>
            </button>
          ))}
        </div>
        <div className="pt-1.5">
          <div className="flex pl-[7px]">
            {FEATURES.map((kind, i) => (
              <div key={i} className="flex flex-col items-center">
                <button
                  aria-label={`Feature ${i + 1}`}
                  className={clsx("w-[30px] h-[30px] flex items-center justify-center", kind === "X" && "bg-[#0a97da] rounded-sm")}
                >
                  <FeatureIcon kind={kind} />
                </button>
                <span className="w-0.5 h-[5px] bg-[#c8c8c8]" />
              </div>
            ))}
          </div>
          <div className="h-0.5 mr-[15px] flex gap-1">
            <span className="w-1 bg-[#c8c8c8]" />
            <span className="w-1 bg-[#c8c8c8]" />
            <span className="flex-1 bg-[#c8c8c8]" />
          </div>
        </div>
        <svg viewBox="0 0 14 40" className="w-3.5 h-10 mt-1 -ml-2 relative" fill="#666">
          <path d="M0 0h14v6l-5 4H5L0 6zM6 8h2v32H6z" />
        </svg>
        <button aria-label="Timeline settings" className="ml-auto mr-4 mt-1.5">
          <Gear className="w-5 h-5" />
        </button>
      </div>
    </footer>
  );
}

/* ---------- taskbar ---------- */

function AppIcon({ children }: { children: ReactNode }) {
  return <svg viewBox="0 0 30 30" className="w-[30px] h-[30px] shrink-0" fill="none">{children}</svg>;
}

const ChromeIcon = (
  <svg viewBox="0 0 28 28" className="w-7 h-7 shrink-0">
    <circle cx="14" cy="14" r="13" fill="#dd4b3e" />
    <path d="M14 14L2.700 7.500A13 13 0 0 0 13 27z" fill="#1fa15d" />
    <path d="M14 14l-1 13A13 13 0 0 0 26 9H14z" fill="#fdce41" />
    <circle cx="14" cy="14" r="6.500" fill="#fff" />
    <circle cx="14" cy="14" r="5" fill="#4a86f0" />
  </svg>
);

const PINNED: { name: string; icon: ReactNode }[] = [
  { name: "Edge", icon: <FaEdgeLegacy className="w-[26px] h-[26px] text-[#0a78d7]" /> },
  {
    name: "Mail",
    icon: (
      <AppIcon>
        <path d="M0 10L15 0l15 10v5H0z" fill="#0c4d97" />
        <path d="M2 10h26L15 22z" fill="#eee" />
        <path d="M0 10l30 18H0z" fill="#2da7ec" />
        <path d="M30 10v18H0z" fill="#32c0f6" />
        <path d="M0 10l15 9L0 28z" fill="#1e94e2" />
      </AppIcon>
    ),
  },
  {
    name: "Notepad",
    icon: (
      <AppIcon>
        <path d="M24 4l3 1-1 20-3 2z" fill="#ac7d3c" />
        <path d="M11 2l14 1-3 24-20-5z" fill="#8ec7d1" />
        <path d="M11 2l14 1-2 6-14-2z" fill="#d7eef0" />
        <path d="M2 20l20 4v3L2 23z" fill="#dcdcdc" />
        <path d="M12 2h12" stroke="#555" strokeWidth="2" strokeDasharray="1 1" />
      </AppIcon>
    ),
  },
  {
    name: "Store",
    icon: (
      <AppIcon>
        <path d="M10 8c0-8 9-8 9 0M12 8c0-8 10-8 10 0" stroke="#ddd" strokeWidth="1.500" />
        <path d="M1 7h28v22H1z" fill="#fff" />
        <path d="M9 12h6v6H9z" fill="#f25022" />
        <path d="M16 12h6v6h-6z" fill="#7fba00" />
        <path d="M9 19h6v6H9z" fill="#00a4ef" />
        <path d="M16 19h6v6h-6z" fill="#ffb900" />
      </AppIcon>
    ),
  },
  {
    name: "Paint",
    icon: (
      <AppIcon>
        <path d="M2 16C5 6 17 1 25 7c5 5 2 14-4 19-4 3-9 2-9-2s-2-4-6-3-5-1-4-5z" fill="#bddcf0" />
        <circle cx="6" cy="16" r="2.500" fill="#d84040" />
        <circle cx="11" cy="11" r="2.500" fill="#50b848" />
        <circle cx="18" cy="8" r="2.500" fill="#f5c330" />
        <circle cx="13" cy="18" r="2" fill="#2b363b" />
        <path d="M25 6l-9 22" stroke="#dd8424" strokeWidth="3" />
        <path d="M23 7l1-6 4 1 1 4-4 3z" fill="#9c7348" />
      </AppIcon>
    ),
  },
  {
    name: "WhatsApp",
    icon: (
      <span className="relative w-7 h-7">
        <svg viewBox="0 0 28 28" className="w-7 h-7">
          <path d="M14 1a13 13 0 1 1-6 24l-7 2 2-7A13 13 0 0 1 14 1z" fill="#fff" />
          <circle cx="14" cy="14" r="11" fill="#2bc04c" />
        </svg>
        <FaWhatsapp className="absolute inset-0.5 w-6 h-6 text-white" />
      </span>
    ),
  },
  {
    name: "Snipping Tool",
    icon: (
      <AppIcon>
        <ellipse cx="13" cy="12" rx="13" ry="7" transform="rotate(-15 13 13)" fill="#999" />
        <ellipse cx="14" cy="9" rx="13" ry="7" transform="rotate(-15 14 9)" fill="#f2f2f2" stroke="#dd2f2f" strokeWidth="1.500" />
        <path d="M14 3l6 17M9 9l12 10" stroke="#888" strokeWidth="1.500" />
        <path d="M19 17l-5 5c0 6 5 4 6-5 3 8 0 12 4 11s0-9-4-11c7-2 9 2 8 4s-5 0-8-4" stroke="#1e7fd0" strokeWidth="1.800" />
      </AppIcon>
    ),
  },
  {
    name: "Excel",
    icon: (
      <AppIcon>
        <path d="M8 1h22v28H8z" fill="#21a366" />
        <path d="M19 1h11v7H19z" fill="#33c481" />
        <path d="M8 15h11v14H8z" fill="#185c37" />
        <path d="M19 15h11v7H19z" fill="#107c41" />
        <path d="M19 22h11v7H19z" fill="#185c37" />
        <path d="M1 7h15v16H1z" fill="#107c41" />
        <path d="M5.500 11l6 8M11.500 11l-6 8" stroke="#fff" strokeWidth="2.200" />
      </AppIcon>
    ),
  },
];

const TRAY: { name: string; width: string; icon: ReactNode }[] = [
  {
    name: "Get help", width: "w-10",
    icon: (
      <>
        <circle cx="12" cy="12" r="12" fill="#fff" stroke="none" />
        <circle cx="12" cy="12" r="10" fill="#0a97da" stroke="none" />
        <path d="M8 9c0-5 8-5 8 0 0 3-4 2.500-4 6M12 16.500v2.500" strokeWidth="2.500" />
      </>
    ),
  },
  { name: "Show hidden icons", width: "w-10", icon: <path d="M5 16l7-8 7 8" /> },
  {
    name: "OneDrive", width: "w-10",
    icon: (
      <>
        <path d="M4 13c1-7 10-9 13-2l-8 6z" fill="#aaa" stroke="none" />
        <path d="M5 18c-5-1-3-7 2-6 3-4 8-3 9 0 5-1 7 5 4 6z" fill="#fff" stroke="none" />
      </>
    ),
  },
  { name: "Volume", width: "w-10", icon: <path d="M2 9h3l5-4v14l-5-4H2zM13 9c1 2 1 4 0 6M16 7c2 3 2 7 0 10M19 5c3 5 3 9 0 14" /> },
  {
    name: "Network", width: "w-[42px]",
    icon: <path d="M6 20C5 12 11 6 20 5M10 20c-1-6 4-11 10-11M14 20c-1-4 2-7 6-7M18 19.500h1.500" />,
  },
  {
    name: "Ink workspace", width: "w-12",
    icon: <path d="M11 17L18 4c2-2 4 0 3 2l-8 13-4 1zM12 12c-9-1-11 8-6 9s4-7 8-11M16 12c6 0 6 2 5 4" />,
  },
];

function TaskWindow({ label, icon, width, active }: { label: string; icon: ReactNode; width: string; active?: boolean }) {
  return (
    <button
      className={clsx(
        "flex items-center gap-1 text-sm pt-[3px] border-b-[3px] border-[#76b9ed] whitespace-nowrap overflow-hidden",
        width,
        active && "bg-[#636b70]"
      )}
    >
      {icon}
      {label}
    </button>
  );
}

function Taskbar() {
  return (
    <nav className={clsx("h-[50px] shrink-0 flex items-stretch text-white bg-linear-to-r from-[#22343d] via-[#273136] to-[#1e2d35]", WIN_FONT)}>
      <button aria-label="Start" className="w-[60px] flex items-center justify-center">
        <svg viewBox="0 0 20 20" className="w-5 h-5" fill="#fff">
          <path d="M0 3l8-1v7.500H0zM9 2l11-2v9.500H9zM0 10.500h8V18l-8-1zM9 10.500h11V20L9 18z" />
        </svg>
      </button>
      <label className="w-[430px] flex items-center bg-[#f1f1f1] border border-[#bbb] pl-3.5 text-black">
        <svg viewBox="0 0 22 22" className="w-[22px] h-[22px]" fill="none" stroke="#222" strokeWidth="1.500">
          <circle cx="14" cy="8" r="6.500" />
          <path d="M9 13l-8 8" />
        </svg>
        <input
          aria-label="Search"
          placeholder="Type here to search"
          className="ml-3 flex-1 bg-transparent outline-none text-lg placeholder:text-[#2b2b2b]"
        />
      </label>
      <button aria-label="Cortana" className="w-[60px] flex items-center justify-center">
        <span className="w-5 h-5 rounded-full border-[3px] border-white" />
      </button>
      <button aria-label="Task view" className="w-[60px] flex items-center justify-center">
        <svg viewBox="0 0 21 20" className="w-[21px] h-5" fill="none" stroke="#fff" strokeWidth="1.300">
          <path d="M1 5h12v10H1zM1 0v3h12V0M1 20v-3h12v3M19 0v4M19 10v10" />
          <path d="M17 6h4v3h-4z" fill="#fff" stroke="none" />
        </svg>
      </button>
      <span className="self-center w-1 h-6 ml-[5px] border-x border-[#56636a]" />
      <button aria-label="File Explorer" className="ml-3.5 w-[53px] flex items-center justify-center">
        <AppIcon>
          <path d="M1 3h12l2 4H1z" fill="#e6a117" />
          <path d="M1 6l12-1h15v20H1z" fill="#fcd463" />
          <path d="M6 16h18v10h-5v-6h-8v6H6z" fill="#3f97dc" />
        </AppIcon>
      </button>
      <span className="ml-1.5 flex">
        <TaskWindow label="(3) Sov..." width="w-[105px] pl-[5px]" icon={ChromeIcon} />
      </span>
      <div className="ml-1.5 flex">
        {PINNED.map((p) => (
          <button key={p.name} aria-label={p.name} className="w-[53px] flex items-center justify-center">
            {p.icon}
          </button>
        ))}
      </div>
      <TaskWindow label="Autode..." width="w-[114px] pl-[9px]" active icon={<FusionLogo tag className="w-[30px] h-[30px] shrink-0" />} />
      <span className="ml-1.5 flex">
        <TaskWindow
          label="Sovol S..."
          width="w-[104px] pl-[7px]"
          icon={
            <svg viewBox="0 0 25 28" className="w-[25px] h-7 mr-0.5 shrink-0">
              <path d="M0 6l4-2v20l-4-2z" fill="#d6128b" />
              <path d="M4 4l4-1v22l-4-1z" fill="#8e1a8e" />
              <path d="M8 2l5-2 4 2v24l-4 2-5-2z" fill="#5cb531" />
              <path d="M17 3l4 1v20l-4 1z" fill="#1b3f94" />
              <path d="M21 4l4 2v16l-4 2z" fill="#1b9be0" />
            </svg>
          }
        />
      </span>
      <div className="ml-auto flex">
        {TRAY.map((t) => (
          <button key={t.name} aria-label={t.name} className={clsx("flex items-center justify-center", t.width)}>
            <svg
              viewBox="0 0 24 24"
              className={t.name === "Get help" ? "w-7 h-7" : "w-6 h-6"}
              fill="none"
              stroke="#fff"
              strokeWidth="1.300"
            >
              {t.icon}
            </svg>
          </button>
        ))}
        <button className="w-12 text-[15px]">ENG</button>
        <button className="w-[86px] text-sm leading-[23px]">
          14:11
          <br />
          04/04/2020
        </button>
        <button aria-label="Notifications" className="w-[62px] pr-1 flex items-center justify-center">
          <svg viewBox="0 0 22 22" className="w-[22px] h-[22px]" fill="none" stroke="#fff" strokeWidth="1.300">
            <path d="M1 1h20v16h-7l-3 3-3-3H1z" />
          </svg>
        </button>
        <span className="w-1.5 border-l border-[#6c777c]" />
      </div>
    </nav>
  );
}

export default function App() {
  return (
    <div className={clsx("h-screen flex flex-col overflow-hidden bg-white", UI_FONT)}>
      <TitleBar />
      <TabStrip />
      <Ribbon />
      <Canvas />
      <Timeline />
      <Taskbar />
    </div>
  );
}
